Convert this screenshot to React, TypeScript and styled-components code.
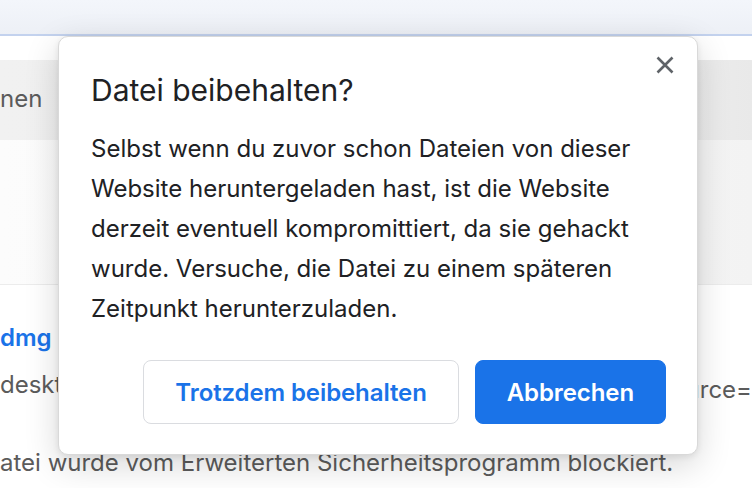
import React from "react";
import styled, { createGlobalStyle } from "styled-components";

const Global = createGlobalStyle`
  html, body { margin: 0; padding: 0; }
  body {
    width: 752px;
    height: 488px;
    overflow: hidden;
    background: #ffffff;
    font-family: Inter, "Noto Sans", "Liberation Sans", sans-serif;
  }
`;

const Page = styled.div`
  position: relative;
  width: 752px;
  height: 488px;
  overflow: hidden;
  display: flex;
  flex-direction: column;
  background: #ffffff;
`;

const TopBar = styled.div`
  height: 34px;
  background: linear-gradient(#f3f6fb, #edf0f6);
  border-bottom: 2px solid #c3d2ee;
  flex: none;
`;

const WhiteGap = styled.div`
  height: 24px;
  flex: none;
  background: #ffffff;
`;

const GrayBand = styled.div`
  height: 80px;
  flex: none;
  background: linear-gradient(90deg, #f1f1f1, #ededed 90%, #e9e9e9);
  display: flex;
  align-items: center;
  padding-bottom: 2px;
  box-sizing: border-box;
`;

const Faded = styled.div`
  height: 144px;
  flex: none;
  background: linear-gradient(90deg, #fcfcfc, #f6f6f6 80%, #f3f3f3);
  border-bottom: 1px solid #ececec;
`;

const BgText = styled.div<{ $color?: string; $weight?: number }>`
  font-size: 24px;
  line-height: 24px;
  color: ${(p) => p.$color ?? "#5b5b5b"};
  font-weight: ${(p) => p.$weight ?? 400};
  white-space: nowrap;
`;

const Item = styled.div`
  flex: 1;
  display: flex;
  flex-direction: column;
  padding-top: 41px;
`;

const Row = styled.div`
  display: flex;
  justify-content: space-between;
  height: 24px;
`;

const Backdrop = styled.div`
  position: absolute;
  left: 58px;
  top: 36px;
  width: 640px;
  height: 419px;
  box-sizing: border-box;
  background: #ffffff;
  border-radius: 10px;
  border: 1px solid #d9d9d9;
  box-shadow: 0 10px 34px rgba(0, 0, 0, 0.16), 0 2px 6px rgba(0, 0, 0, 0.08);
  padding: 35px 31px 30px 32px;
  display: flex;
  flex-direction: column;
`;

const Title = styled.h1`
  margin: 0;
  font-size: 30px;
  line-height: 36px;
  font-weight: 400;
  color: #202124;
`;

const Body = styled.p`
  margin: 21px 0 0;
  font-size: 24px;
  line-height: 40px;
  color: #202124;
  width: 560px;
`;

const Actions = styled.div`
  margin-top: auto;
  display: flex;
  justify-content: flex-end;
  gap: 16px;
`;

const Button = styled.button<{ $primary?: boolean }>`
  height: 64px;
  box-sizing: border-box;
  border-radius: 8px;
  font-family: inherit;
  font-size: 24px;
  font-weight: 600;
  letter-spacing: -0.1px;
  padding: 0 31px;
  cursor: pointer;
  border: 1px solid ${(p) => (p.$primary ? "#1a73e8" : "#dadce0")};
  background: ${(p) => (p.$primary ? "#1a73e8" : "#ffffff")};
  color: ${(p) => (p.$primary ? "#ffffff" : "#1a73e8")};
`;

const Close = styled.button`
  position: absolute;
  top: 12px;
  right: 16px;
  width: 32px;
  height: 32px;
  padding: 0;
  border: none;
  background: transparent;
  display: flex;
  align-items: center;
  justify-content: center;
`;

export default function App() {
  return (
    <>
      <Global />
      <Page>
        <TopBar />
        <WhiteGap />
        <GrayBand>
          <BgText>nen</BgText>
        </GrayBand>
        <Faded />
        <Item>
          <BgText $color="#1a73e8" $weight={600}>dmg</BgText>
          <Row style={{ marginTop: 23 }}>
            <BgText>deskto</BgText>
            <BgText style={{ marginTop: 5 }}>urce=</BgText>
          </Row>
          <BgText style={{ marginTop: 54 }}>atei wurde vom Erweiterten Sicherheitsprogramm blockiert.</BgText>
        </Item>
        <Backdrop role="dialog">
          <Close aria-label="Schließen">
            <svg width="18" height="18" viewBox="0 0 18 18">
              <path d="M1.5 1.5 L16.5 16.5 M16.5 1.5 L1.5 16.5" stroke="#5f6368" strokeWidth="2.6" strokeLinecap="butt" />
            </svg>
          </Close>
          <Title>Datei beibehalten?</Title>
          <Body>
            Selbst wenn du zuvor schon Dateien von dieser Website heruntergeladen hast, ist die Website derzeit eventuell kompromittiert, da sie gehackt wurde. Versuche, die Datei zu einem späteren Zeitpunkt herunterzuladen.
          </Body>
          <Actions>
            <Button>Trotzdem beibehalten</Button>
            <Button $primary>Abbrechen</Button>
          </Actions>
        </Backdrop>
      </Page>
    </>
  );
}
